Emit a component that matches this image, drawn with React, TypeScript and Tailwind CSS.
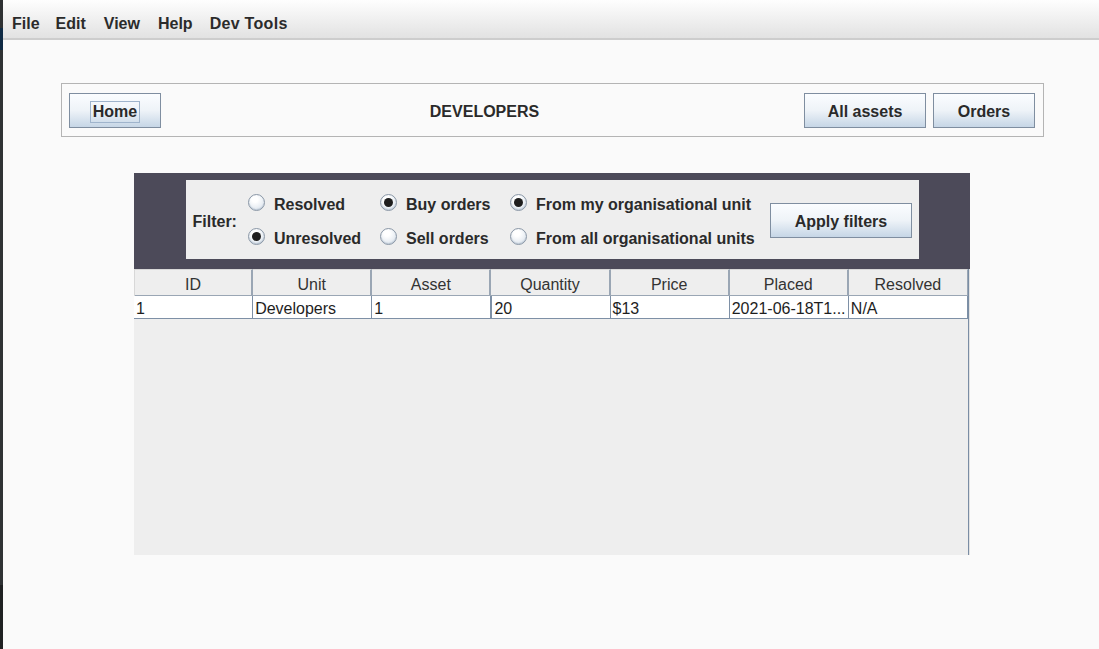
import React from "react";

const font = { fontFamily: '"Liberation Sans", Arial, sans-serif' };

function Radio({ checked, label }: { checked?: boolean; label: string }) {
  return (
    <div className="flex items-center h-[34px]">
      <span className="w-[17px] h-[17px] rounded-full border border-[#8a97a6] bg-[radial-gradient(circle_at_40%_30%,#ffffff_20%,#d3dde8_100%)] flex items-center justify-center shadow-[inset_0_-1px_1px_rgba(120,140,165,0.35)]">
        {checked && <span className="w-[9px] h-[9px] rounded-full bg-[#1e1e1e]" />}
      </span>
      <span className="ml-[9px] pt-[5px] text-[16px] font-bold text-[#2a2a2a] whitespace-nowrap">{label}</span>
    </div>
  );
}

function Btn({ label, className = "", focus }: { label: string; className?: string; focus?: boolean }) {
  return (
    <div
      className={
        "h-[35px] flex items-center justify-center pt-[3px] border border-[#7f8ea0] bg-gradient-to-b from-[#fbfdff] via-[#eef3f8] to-[#c6d6e6] text-[16px] font-bold text-[#2a2a2a] " +
        className
      }
    >
      <span className={focus ? "border border-[#9fb4cc] px-[2px] leading-[20px]" : ""}>{label}</span>
    </div>
  );
}

const cols = ["ID", "Unit", "Asset", "Quantity", "Price", "Placed", "Resolved"];
const row = ["1", "Developers", "1", "20", "$13", "2021-06-18T1...", "N/A"];

export default function App() {
  return (
    <div className="flex w-[1099px] h-[649px] bg-[#fafafa] overflow-hidden" style={font}>
      <div className="w-[3px] flex flex-col shrink-0">
        <div className="h-[28px] bg-[#2e3133]" />
        <div className="h-[22px] bg-[#0f2a44]" />
        <div className="flex-1 bg-[#2f3234]" />
        <div className="h-[64px] bg-[#1f2122]" />
      </div>
      <div className="flex-1 flex flex-col">
        <div className="h-[40px] shrink-0 bg-gradient-to-b from-[#fefefe] to-[#e2e2e2] border-b-2 border-[#cdcdcd] flex items-center pt-[9px] pl-[9px] text-[16px] font-bold text-[#2b2b2b]">
          <span>File</span>
          <span className="ml-[16px]">Edit</span>
          <span className="ml-[18px]">View</span>
          <span className="ml-[18px]">Help</span>
          <span className="ml-[17px] tracking-[0.3px]">Dev Tools</span>
        </div>

        <div className="ml-[58px] mt-[43px] w-[983px] h-[54px] border border-[#b4b4b4] flex items-center px-[7px]">
          <Btn label="Home" focus className="w-[92px]" />
          <div className="flex-1 text-center pt-[4px] text-[16px] font-bold text-[#2a2a2a] pl-[4px]">DEVELOPERS</div>
          <Btn label="All assets" className="w-[122px]" />
          <Btn label="Orders" className="w-[102px] ml-[7px] mr-[1px]" />
        </div>

        <div className="ml-[131px] mt-[36px] w-[836px]">
          <div className="bg-[#4c4a59] h-[96px] pt-[7px] flex justify-center">
            <div className="w-[733px] h-[79px] bg-[#eeeeee] flex items-center pl-[7px]">
              <span className="text-[16px] font-bold text-[#2a2a2a] mr-[11px] pt-[5px]">Filter:</span>
              <div className="flex flex-col w-[132px]">
                <Radio label="Resolved" />
                <Radio checked label="Unresolved" />
              </div>
              <div className="flex flex-col w-[130px]">
                <Radio checked label="Buy orders" />
                <Radio label="Sell orders" />
              </div>
              <div className="flex flex-col w-[260px]">
                <Radio checked label="From my organisational unit" />
                <Radio label="From all organisational units" />
              </div>
              <Btn label="Apply filters" className="w-[142px] h-[35px] mt-[1px]" />
            </div>
          </div>
          <div className="w-[836px] h-[286px] flex">
            <div className="w-[834px] bg-[#eeeeee] flex flex-col">
              <div className="grid grid-cols-7 h-[27px] border-b border-[#9aa6b4]">
                {cols.map((c, i) => (
                  <div
                    key={c}
                    className={
                      "flex items-center justify-center pt-[3px] text-[16px] text-[#333333] border-t border-[#d8d8d8] " +
                      (i < 6 ? "border-r-2 border-r-[#9aa6b4]" : "border-r border-r-[#9aa6b4]") +
                      (i === 0 ? " border-l border-l-[#d8d8d8]" : "")
                    }
                  >
                    {c}
                  </div>
                ))}
              </div>
              <div className="grid grid-cols-7 h-[23px] bg-white border-b border-[#7e90a6]">
                {row.map((c, i) => (
                  <div
                    key={i}
                    className={
                      "flex items-center pl-[2px] pt-[4px] text-[16px] text-[#1e1e1e] whitespace-nowrap overflow-hidden border-r border-[#7e90a6] leading-none" +
                      (i === 3 ? " border-l border-l-[#7e90a6]" : "")
                    }
                  >
                    {c}
                  </div>
                ))}
              </div>
              <div className="flex-1" />
            </div>
            <div className="w-[1px] bg-[#7a8da4] h-full" />
            <div className="w-[1px] bg-[#e2e2e2] h-full" />
          </div>
        </div>
      </div>
    </div>
  );
}
